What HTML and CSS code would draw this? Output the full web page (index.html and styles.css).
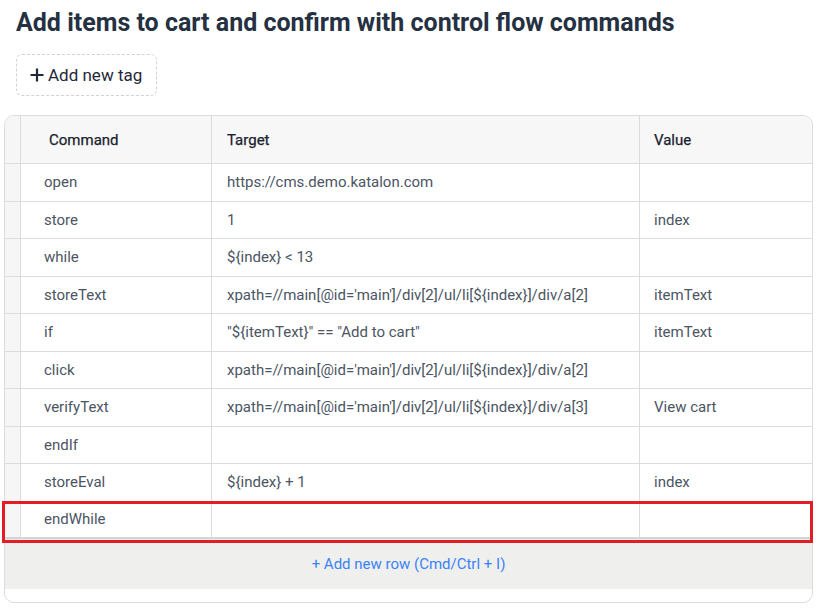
FILE: index.html
```html
<!DOCTYPE html>
<html>
<head>
<meta charset="utf-8">
<link rel="stylesheet" href="styles.css">
</head>
<body>
<h1 class="title">Add items to cart and confirm with control flow commands</h1>
<div class="tags">
  <button class="tag-btn"><svg class="plus" width="14" height="14" viewBox="0 0 14 14"><path d="M7 0.5v13M0.5 7h13" stroke="#1f2937" stroke-width="2.2"/></svg><span>Add new tag</span></button>
</div>
<div class="table">
  <div class="row head">
    <div class="cell gut"></div>
    <div class="cell cmd">Command</div>
    <div class="cell tgt">Target</div>
    <div class="cell val">Value</div>
  </div>
  <div class="row"><div class="cell gut"></div><div class="cell cmd">open</div><div class="cell tgt">https://cms.demo.katalon.com</div><div class="cell val"></div></div>
  <div class="row"><div class="cell gut"></div><div class="cell cmd">store</div><div class="cell tgt">1</div><div class="cell val">index</div></div>
  <div class="row"><div class="cell gut"></div><div class="cell cmd">while</div><div class="cell tgt">${index} &lt; 13</div><div class="cell val"></div></div>
  <div class="row"><div class="cell gut"></div><div class="cell cmd">storeText</div><div class="cell tgt">xpath=//main[@id='main']/div[2]/ul/li[${index}]/div/a[2]</div><div class="cell val">itemText</div></div>
  <div class="row"><div class="cell gut"></div><div class="cell cmd">if</div><div class="cell tgt">"${itemText}" == "Add to cart"</div><div class="cell val">itemText</div></div>
  <div class="row"><div class="cell gut"></div><div class="cell cmd">click</div><div class="cell tgt">xpath=//main[@id='main']/div[2]/ul/li[${index}]/div/a[2]</div><div class="cell val"></div></div>
  <div class="row"><div class="cell gut"></div><div class="cell cmd">verifyText</div><div class="cell tgt">xpath=//main[@id='main']/div[2]/ul/li[${index}]/div/a[3]</div><div class="cell val">View cart</div></div>
  <div class="row"><div class="cell gut"></div><div class="cell cmd">endIf</div><div class="cell tgt"></div><div class="cell val"></div></div>
  <div class="row"><div class="cell gut"></div><div class="cell cmd">storeEval</div><div class="cell tgt">${index} + 1</div><div class="cell val">index</div></div>
  <div class="row last highlight"><div class="cell gut"></div><div class="cell cmd">endWhile</div><div class="cell tgt"></div><div class="cell val"></div></div>
  <div class="footer"><span class="add-row">+ Add new row (Cmd/Ctrl + I)</span></div>
</div>
</body>
</html>
```
FILE: styles.css
```css
* { box-sizing: border-box; }
body {
  margin: 0;
  font-family: Roboto, "Noto Sans", sans-serif;
  background: #fff;
  color: #4b5563;
}
.title {
  margin: 0;
  padding: 7px 0 0 16px;
  font-size: 25px;
  line-height: 31px;
  font-weight: 700;
  color: #253142;
}
.tags {
  padding: 16px 0 0 16px;
}
.tag-btn {
  display: flex;
  align-items: center;
  gap: 4px;
  height: 42px;
  width: 141px;
  padding: 0 0 0 13px;
  background: #fff;
  border: 1px dashed #cfd3d8;
  border-radius: 6px;
  font-family: Roboto, sans-serif;
  font-size: 17px;
  color: #1f2937;
}
.plus { display: block; }
.table {
  margin: 19px 4px 0 4px;
  border: 1px solid #dcdcdc;
  border-radius: 10px;
  position: relative;
  padding-bottom: 13px;
}
.row {
  display: grid;
  grid-template-columns: 16px 191px 428px 1fr;
  height: 37.5px;
  border-bottom: 1px solid #dcdcdc;
  position: relative;
}
.row.head {
  height: 48px;
  background: #f7f7f7;
  border-radius: 10px 10px 0 0;
}
.row.last {
  border-bottom: 2px solid #d4d4d4;
}
.cell {
  border-right: 1px solid #dcdcdc;
  display: flex;
  align-items: center;
  font-size: 15px;
  color: #4b5563;
  white-space: nowrap;
}
.cell.val { border-right: none; padding-left: 14px; }
.cell.gut { background: #f6f6f6; }
.head .gut { border-top-left-radius: 10px; }
.cmd { padding-left: 23px; }
.tgt { padding-left: 15px; }
.head .cell {
  color: #1a2230;
  font-weight: 400;
  -webkit-text-stroke: 0.25px #1a2230;
}
.head .cmd { padding-left: 28px; }
.highlight::after {
  content: "";
  position: absolute;
  top: -1px;
  left: -3px;
  right: -1px;
  bottom: -6px;
  border: 3px solid #e31d25;
  pointer-events: none;
}
.footer {
  height: 50px;
  background: #eff0ee;
  display: flex;
  align-items: center;
  justify-content: center;
}
.add-row {
  color: #3b82f6;
  font-size: 15px;
}
```
